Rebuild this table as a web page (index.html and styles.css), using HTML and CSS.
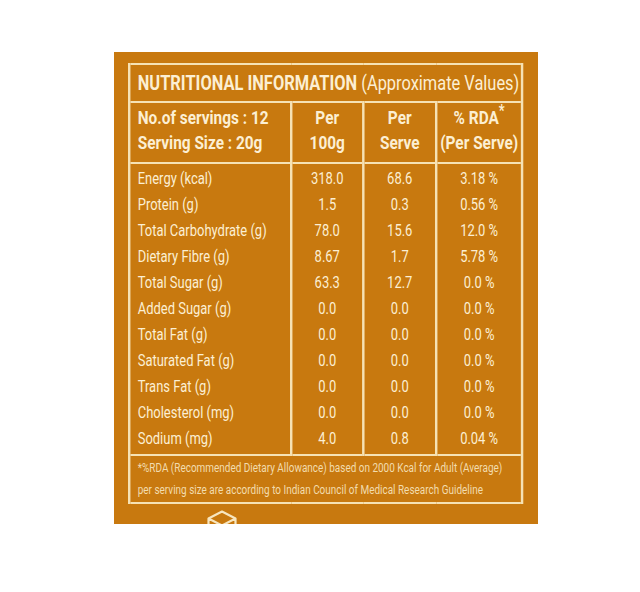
FILE: index.html
```html
<!DOCTYPE html>
<html lang="en">
<head>
<meta charset="utf-8">
<title>Nutritional Information</title>
<link rel="stylesheet" href="styles.css">
</head>
<body>
<div class="panel">
  <table class="nutri">
    <colgroup>
      <col class="c1"><col class="c2"><col class="c3"><col class="c4">
    </colgroup>
    <tr class="title-row">
      <td colspan="4"><b>NUTRITIONAL INFORMATION</b> (Approximate Values)</td>
    </tr>
    <tr class="head-row">
      <td class="lbl">No.of servings : 12<br>Serving Size : 20g</td>
      <td>Per<br>100g</td>
      <td>Per<br>Serve</td>
      <td>% RDA<sup>*</sup><br>(Per Serve)</td>
    </tr>
    <tr class="data first"><td class="lbl">Energy (kcal)</td><td>318.0</td><td>68.6</td><td>3.18 %</td></tr>
    <tr class="data"><td class="lbl">Protein (g)</td><td>1.5</td><td>0.3</td><td>0.56 %</td></tr>
    <tr class="data"><td class="lbl">Total Carbohydrate (g)</td><td>78.0</td><td>15.6</td><td>12.0 %</td></tr>
    <tr class="data"><td class="lbl">Dietary Fibre (g)</td><td>8.67</td><td>1.7</td><td>5.78 %</td></tr>
    <tr class="data"><td class="lbl">Total Sugar (g)</td><td>63.3</td><td>12.7</td><td>0.0 %</td></tr>
    <tr class="data"><td class="lbl">Added Sugar (g)</td><td>0.0</td><td>0.0</td><td>0.0 %</td></tr>
    <tr class="data"><td class="lbl">Total Fat (g)</td><td>0.0</td><td>0.0</td><td>0.0 %</td></tr>
    <tr class="data"><td class="lbl">Saturated Fat (g)</td><td>0.0</td><td>0.0</td><td>0.0 %</td></tr>
    <tr class="data"><td class="lbl">Trans Fat (g)</td><td>0.0</td><td>0.0</td><td>0.0 %</td></tr>
    <tr class="data"><td class="lbl">Cholesterol (mg)</td><td>0.0</td><td>0.0</td><td>0.0 %</td></tr>
    <tr class="data last"><td class="lbl">Sodium (mg)</td><td>4.0</td><td>0.8</td><td>0.04 %</td></tr>
    <tr class="foot-row">
      <td colspan="4">*%RDA (Recommended Dietary Allowance) based on 2000 Kcal for Adult (Average)<br>per serving size are according to Indian Council of Medical Research Guideline</td>
    </tr>
  </table>
  <svg class="cube" width="30" height="30" viewBox="0 0 30 30" aria-hidden="true">
    <path d="M15 1.5 L28.5 8.5 L28.5 22 L15 29 L1.5 22 L1.5 8.5 Z M1.5 8.5 L15 15.5 L28.5 8.5 M15 15.5 V29" fill="none" stroke="#f7e6bf" stroke-width="2.2" stroke-linejoin="round"/>
  </svg>
</div>
</body>
</html>
```

FILE: styles.css
```css
html, body {
  margin: 0;
  padding: 0;
  background: #ffffff;
}

.panel {
  box-sizing: border-box;
  width: 424px;
  height: 472px;
  margin: 52px 0 0 114px;
  padding: 11px 0 0 14px;
  background: #c8790f;
  overflow: hidden;
  font-family: Roboto, "Noto Sans", sans-serif;
  color: #fcefd3;
}

/* The label face is a condensed sans: the table is laid out wide and
   narrowed horizontally as one block. */
.nutri {
  width: 485px;
  border-collapse: collapse;
  table-layout: fixed;
  border-top: 2px solid #f6e2b4;
  border-bottom: 2px solid #f6e2b4;
  border-left: 3px solid #f6e2b4;
  border-right: 3px solid #f6e2b4;
  transform: scaleX(0.81);
  transform-origin: 0 0;
}

.c1 { width: 200px; }
.c2 { width: 89px; }
.c3 { width: 90px; }
.c4 { width: 106px; }

.nutri td {
  border-left: 3px solid #f6e2b4;
  border-right: 3px solid #f6e2b4;
  padding: 0;
  text-align: center;
  vertical-align: middle;
  white-space: nowrap;
}

.nutri td.lbl {
  text-align: left;
  padding-left: 9px;
}

.title-row td {
  height: 36px;
  text-align: left;
  padding-left: 9px;
  font-size: 20.3px;
  border-bottom: 2px solid #f6e2b4;
}

.head-row td {
  height: 54px;
  padding-bottom: 5px;
  font-size: 19px;
  font-weight: bold;
  line-height: 25px;
  border-bottom: 2px solid #f6e2b4;
}

.head-row td.lbl {
  padding-bottom: 5px;
}

.head-row sup {
  font-size: 16px;
  line-height: 0;
  vertical-align: 8px;
}

.data td {
  height: 26px;
  font-size: 16px;
  line-height: 26px;
}

.data.first td {
  padding-top: 2px;
}

.data.last td {
  padding-bottom: 2px;
}

.foot-row td {
  height: 46px;
  text-align: left;
  padding-left: 9px;
  font-size: 12.3px;
  line-height: 22px;
  color: #f2dcae;
  border-top: 2px solid #f6e2b4;
}

.cube {
  display: block;
  margin: 6px 0 0 79px;
}
```
